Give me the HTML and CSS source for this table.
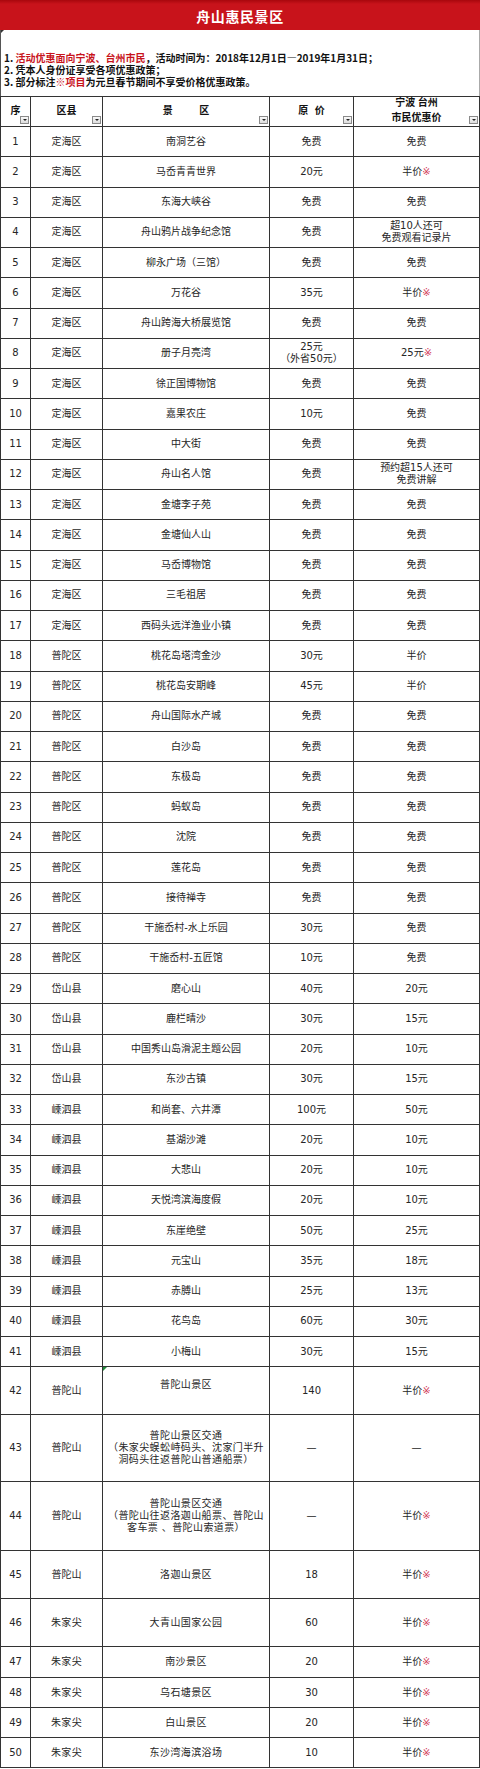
FILE: index.html
```html
<!DOCTYPE html>
<html lang="zh-CN">
<head>
<meta charset="utf-8">
<title>舟山惠民景区</title>
<link rel="stylesheet" href="styles.css">
</head>
<body>
<div class="page">
  <div class="title">舟山惠民景区</div>
  <div class="notes">
    <div class="corner"></div>
    <p>1. <span class="red">活动优惠面向宁波、台州市民</span>，活动时间为：2018年12月1日—2019年1月31日；</p>
    <p>2. 凭本人身份证享受各项优惠政策；</p>
    <p>3. 部分标注<span class="red">※项目</span>为元旦春节期间不享受价格优惠政策。</p>
  </div>
  <div class="tbl">
    <div class="c h">序<i class="dd"></i></div>
    <div class="c h">区县<i class="dd"></i></div>
    <div class="c h wide">景 区<i class="dd"></i></div>
    <div class="c h mid">原 价<i class="dd"></i></div>
    <div class="c h">宁波 台州<br>市民优惠价<i class="dd"></i></div>

    <div class="c">1</div><div class="c">定海区</div><div class="c">南洞艺谷</div><div class="c">免费</div><div class="c">免费</div>
    <div class="c">2</div><div class="c">定海区</div><div class="c">马岙青青世界</div><div class="c">20元</div><div class="c">半价<span class="m">※</span></div>
    <div class="c">3</div><div class="c">定海区</div><div class="c">东海大峡谷</div><div class="c">免费</div><div class="c">免费</div>
    <div class="c">4</div><div class="c">定海区</div><div class="c">舟山鸦片战争纪念馆</div><div class="c">免费</div><div class="c">超10人还可<br>免费观看记录片</div>
    <div class="c">5</div><div class="c">定海区</div><div class="c">柳永广场（三馆）</div><div class="c">免费</div><div class="c">免费</div>
    <div class="c">6</div><div class="c">定海区</div><div class="c">万花谷</div><div class="c">35元</div><div class="c">半价<span class="m">※</span></div>
    <div class="c">7</div><div class="c">定海区</div><div class="c">舟山跨海大桥展览馆</div><div class="c">免费</div><div class="c">免费</div>
    <div class="c">8</div><div class="c">定海区</div><div class="c">册子月亮湾</div><div class="c">25元<br>（外省50元）</div><div class="c">25元<span class="m">※</span></div>
    <div class="c">9</div><div class="c">定海区</div><div class="c">徐正国博物馆</div><div class="c">免费</div><div class="c">免费</div>
    <div class="c">10</div><div class="c">定海区</div><div class="c">嘉果农庄</div><div class="c">10元</div><div class="c">免费</div>
    <div class="c">11</div><div class="c">定海区</div><div class="c">中大街</div><div class="c">免费</div><div class="c">免费</div>
    <div class="c">12</div><div class="c">定海区</div><div class="c">舟山名人馆</div><div class="c">免费</div><div class="c">预约超15人还可<br>免费讲解</div>
    <div class="c">13</div><div class="c">定海区</div><div class="c">金塘李子苑</div><div class="c">免费</div><div class="c">免费</div>
    <div class="c">14</div><div class="c">定海区</div><div class="c">金塘仙人山</div><div class="c">免费</div><div class="c">免费</div>
    <div class="c">15</div><div class="c">定海区</div><div class="c">马岙博物馆</div><div class="c">免费</div><div class="c">免费</div>
    <div class="c">16</div><div class="c">定海区</div><div class="c">三毛祖居</div><div class="c">免费</div><div class="c">免费</div>
    <div class="c">17</div><div class="c">定海区</div><div class="c">西码头远洋渔业小镇</div><div class="c">免费</div><div class="c">免费</div>
    <div class="c">18</div><div class="c">普陀区</div><div class="c">桃花岛塔湾金沙</div><div class="c">30元</div><div class="c">半价</div>
    <div class="c">19</div><div class="c">普陀区</div><div class="c">桃花岛安期峰</div><div class="c">45元</div><div class="c">半价</div>
    <div class="c">20</div><div class="c">普陀区</div><div class="c">舟山国际水产城</div><div class="c">免费</div><div class="c">免费</div>
    <div class="c">21</div><div class="c">普陀区</div><div class="c">白沙岛</div><div class="c">免费</div><div class="c">免费</div>
    <div class="c">22</div><div class="c">普陀区</div><div class="c">东极岛</div><div class="c">免费</div><div class="c">免费</div>
    <div class="c">23</div><div class="c">普陀区</div><div class="c">蚂蚁岛</div><div class="c">免费</div><div class="c">免费</div>
    <div class="c">24</div><div class="c">普陀区</div><div class="c">沈院</div><div class="c">免费</div><div class="c">免费</div>
    <div class="c">25</div><div class="c">普陀区</div><div class="c">莲花岛</div><div class="c">免费</div><div class="c">免费</div>
    <div class="c">26</div><div class="c">普陀区</div><div class="c">接待禅寺</div><div class="c">免费</div><div class="c">免费</div>
    <div class="c">27</div><div class="c">普陀区</div><div class="c">干施岙村-水上乐园</div><div class="c">30元</div><div class="c">免费</div>
    <div class="c">28</div><div class="c">普陀区</div><div class="c">干施岙村-五匠馆</div><div class="c">10元</div><div class="c">免费</div>
    <div class="c">29</div><div class="c">岱山县</div><div class="c">磨心山</div><div class="c">40元</div><div class="c">20元</div>
    <div class="c">30</div><div class="c">岱山县</div><div class="c">鹿栏晴沙</div><div class="c">30元</div><div class="c">15元</div>
    <div class="c">31</div><div class="c">岱山县</div><div class="c">中国秀山岛滑泥主题公园</div><div class="c">20元</div><div class="c">10元</div>
    <div class="c">32</div><div class="c">岱山县</div><div class="c">东沙古镇</div><div class="c">30元</div><div class="c">15元</div>
    <div class="c">33</div><div class="c">嵊泗县</div><div class="c">和尚套、六井潭</div><div class="c">100元</div><div class="c">50元</div>
    <div class="c">34</div><div class="c">嵊泗县</div><div class="c">基湖沙滩</div><div class="c">20元</div><div class="c">10元</div>
    <div class="c">35</div><div class="c">嵊泗县</div><div class="c">大悲山</div><div class="c">20元</div><div class="c">10元</div>
    <div class="c">36</div><div class="c">嵊泗县</div><div class="c">天悦湾滨海度假</div><div class="c">20元</div><div class="c">10元</div>
    <div class="c">37</div><div class="c">嵊泗县</div><div class="c">东崖绝壁</div><div class="c">50元</div><div class="c">25元</div>
    <div class="c">38</div><div class="c">嵊泗县</div><div class="c">元宝山</div><div class="c">35元</div><div class="c">18元</div>
    <div class="c">39</div><div class="c">嵊泗县</div><div class="c">赤膊山</div><div class="c">25元</div><div class="c">13元</div>
    <div class="c">40</div><div class="c">嵊泗县</div><div class="c">花鸟岛</div><div class="c">60元</div><div class="c">30元</div>
    <div class="c">41</div><div class="c">嵊泗县</div><div class="c">小梅山</div><div class="c">30元</div><div class="c">15元</div>
    <div class="c">42</div><div class="c">普陀山</div><div class="c top sp"><i class="note"></i>普陀山景区</div><div class="c">140</div><div class="c">半价<span class="m">※</span></div>
    <div class="c">43</div><div class="c">普陀山</div><div class="c sp">普陀山景区交通<br>（朱家尖蜈蚣峙码头、沈家门半升<br>洞码头往返普陀山普通船票）</div><div class="c">—</div><div class="c">—</div>
    <div class="c">44</div><div class="c">普陀山</div><div class="c sp">普陀山景区交通<br>（普陀山往返洛迦山船票、普陀山<br>客车票 、普陀山索道票）</div><div class="c">—</div><div class="c">半价<span class="m">※</span></div>
    <div class="c">45</div><div class="c">普陀山</div><div class="c sp">洛迦山景区</div><div class="c">18</div><div class="c">半价<span class="m">※</span></div>
    <div class="c">46</div><div class="c sp">朱家尖</div><div class="c sp">大青山国家公园</div><div class="c">60</div><div class="c">半价<span class="m">※</span></div>
    <div class="c">47</div><div class="c sp">朱家尖</div><div class="c sp">南沙景区</div><div class="c">20</div><div class="c">半价<span class="m">※</span></div>
    <div class="c">48</div><div class="c sp">朱家尖</div><div class="c sp">乌石塘景区</div><div class="c">30</div><div class="c">半价<span class="m">※</span></div>
    <div class="c">49</div><div class="c sp">朱家尖</div><div class="c sp">白山景区</div><div class="c">20</div><div class="c">半价<span class="m">※</span></div>
    <div class="c">50</div><div class="c sp">朱家尖</div><div class="c sp">东沙湾海滨浴场</div><div class="c">10</div><div class="c">半价<span class="m">※</span></div>
  </div>
</div>
</body>
</html>
```
FILE: styles.css
```css
* { box-sizing: border-box; }
html, body { margin: 0; padding: 0; background: #fff; }
body {
  font-family: "DejaVu Sans", "Noto Sans CJK SC", sans-serif;
  color: #222;
}
.page { width: 480px; }
.title {
  height: 30px;
  background: linear-gradient(#a8070d 0, #c8131b 4px, #c8131b 100%);
  color: #fff;
  font-family: "Noto Sans CJK SC", sans-serif;
  font-weight: 700;
  font-size: 14px;
  letter-spacing: 0.6px;
  line-height: 30px;
  text-align: center;
  padding-top: 1px;
}
.notes {
  position: relative;
  height: 66px;
  padding: 22px 0 0 3px;
  border-left: 1px solid #555;
  border-right: 1px solid #aaa;
}
.corner {
  position: absolute;
  left: 0; top: 0;
  width: 0; height: 0;
  border-top: 3px solid #333;
  border-right: 3px solid transparent;
}
.notes p {
  margin: 0;
  font-family: "Noto Sans CJK SC", sans-serif;
  font-weight: 700;
  font-size: 10px;
  line-height: 12px;
  color: #111;
  white-space: nowrap;
}
.notes .red { color: #c8141c; }
.tbl {
  display: grid;
  grid-template-columns: 30px 72px 167px 84px 126px;
  grid-template-rows: 30px repeat(41, 30.25px) 48px 67px 69px 48px 48px 31px 30px 30px 30px;
  border-top: 1px solid #333;
  border-left: 1px solid #333;
}
.c {
  position: relative;
  border-right: 1px solid #333;
  border-bottom: 1px solid #333;
  display: flex;
  align-items: center;
  justify-content: center;
  text-align: center;
  font-size: 10px;
  line-height: 12px;
  color: #262626;
}
.c.sp { letter-spacing: 0.4px; }
.c.top { padding-bottom: 12px; }
.h {
  font-family: "Noto Sans CJK SC", sans-serif;
  font-weight: 700;
  color: #111;
  padding-bottom: 5px;
  line-height: 15px;
}
.h.wide { word-spacing: 24px; }
.h.mid { word-spacing: 4px; }
.m { color: #d23a5a; }
.dd {
  position: absolute;
  right: 1px;
  bottom: 2px;
  width: 9px;
  height: 8px;
  border: 1px solid #8a8a8a;
  background: linear-gradient(#fafafa, #dcdcdc);
}
.dd::after {
  content: "";
  position: absolute;
  left: 2px;
  top: 2px;
  border-left: 2px solid transparent;
  border-right: 2px solid transparent;
  border-top: 2px solid #222;
}
.note {
  position: absolute;
  left: 0; top: 0;
  width: 0; height: 0;
  border-top: 4px solid #1f8a3a;
  border-right: 4px solid transparent;
}
```
